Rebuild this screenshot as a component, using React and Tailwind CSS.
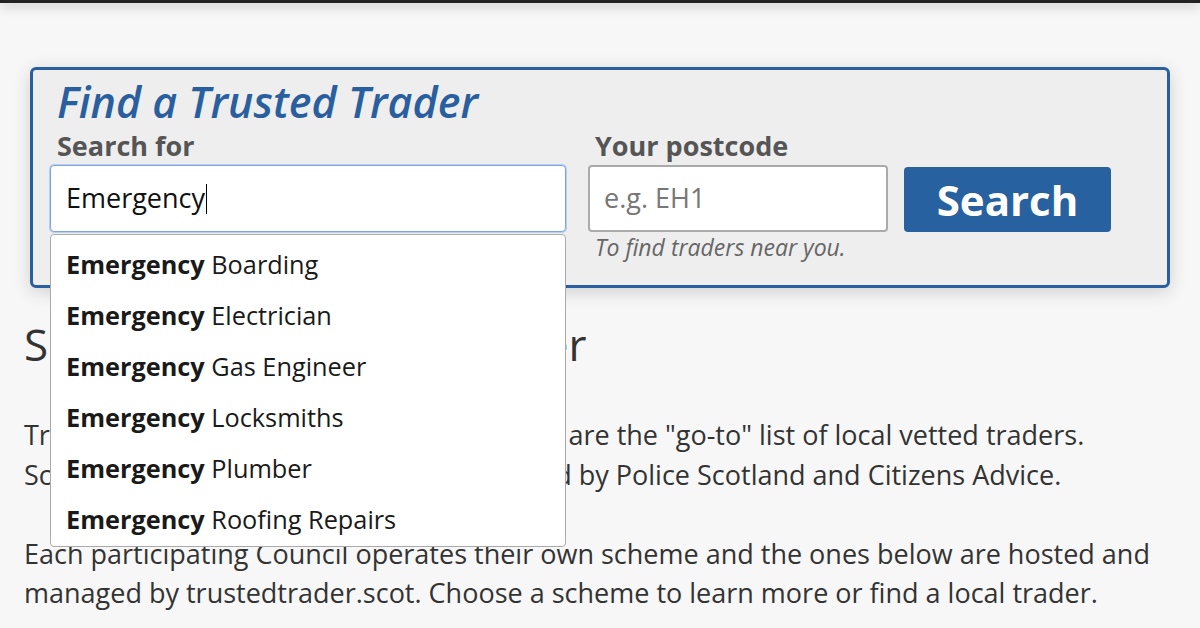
import React from 'react'

const suggestions = ['Boarding', 'Electrician', 'Gas Engineer', 'Locksmiths', 'Plumber', 'Roofing Repairs']

function SearchCard() {
  return (
    <div className="relative mx-[6px] rounded-[6px] border-[3px] border-[#2a5f9f] bg-[#eeeeee] pl-[17px] pt-[8px] pb-[23px] shadow-[0_4px_18px_rgba(0,0,0,0.16)]">
      <h2 className="pl-[7px] text-[43px] leading-[47px] font-semibold italic text-[#2a5f9f]">
        Find a Trusted Trader
      </h2>
      <div className="mt-[6px] flex items-start">
        <div className="relative w-[516px]">
          <label className="block pl-[7px] text-[27px] leading-[30px] font-bold text-[#555]">Search for</label>
          <div className="mt-[4px] flex h-[67px] items-center rounded-[4px] border border-[#7ba6e6] bg-white px-[15px] shadow-[0_0_0_1px_rgba(123,166,230,0.45)]">
            <span className="text-[27px] text-[#111]">Emergency</span>
            <span className="ml-[1px] h-[30px] w-[1px] bg-black" />
          </div>
          <ul className="absolute left-0 top-[103px] z-10 w-[516px] rounded-[4px] border border-[#aaa] bg-white pt-[4px] pb-[1px]">
            {suggestions.map((s) => (
              <li key={s} className="h-[51px] px-[15px] text-[25.3px] leading-[51px] text-[#1a1a1a]">
                <b className="font-bold">Emergency</b> {s}
              </li>
            ))}
          </ul>
        </div>
        <div className="ml-[22px] w-[300px]">
          <label className="block pl-[7px] text-[27px] leading-[30px] font-bold text-[#555]">Your postcode</label>
          <div className="mt-[4px] flex h-[67px] items-center rounded-[4px] border-2 border-[#aaa] bg-white px-[14px]">
            <span className="text-[27px] text-[#777]">e.g. EH1</span>
          </div>
          <p className="pl-[7px] text-[23px] leading-[30px] italic text-[#666]">To find traders near you.</p>
        </div>
        <button className="ml-[16px] mt-[36px] flex h-[65px] w-[207px] items-center justify-center rounded-[4px] bg-[#2861a0] text-[42px] font-bold text-white">
          Search
        </button>
      </div>
    </div>
  )
}

export default function App() {
  return (
    <div className="min-h-screen bg-[#f7f7f7] font-['Open_Sans',sans-serif] text-[#333]">
      <div className="h-[3px] bg-[#222] shadow-[0_2px_12px_rgba(0,0,0,0.4)]" />
      <main className="px-[24px] pt-[64px]">
        <SearchCard />
        <h1 className="mt-[27px] text-[44px] leading-[58px] font-normal text-[#333]">Search for a Trusted Trader</h1>
        <p className="mt-[42px] text-[27px] leading-[39.6px]">
          Trusted Trader schemes run by all councils are the "go-to" list of local vetted traders.
          <br />
          Schemes are fully endorsed, and supported by Police Scotland and Citizens Advice.
        </p>
        <p className="mt-[39.6px] text-[27px] leading-[39.6px]">
          Each participating Council operates their own scheme and the ones below are hosted and managed by
          trustedtrader.scot. Choose a scheme to learn more or find a local trader.
        </p>
      </main>
    </div>
  )
}
